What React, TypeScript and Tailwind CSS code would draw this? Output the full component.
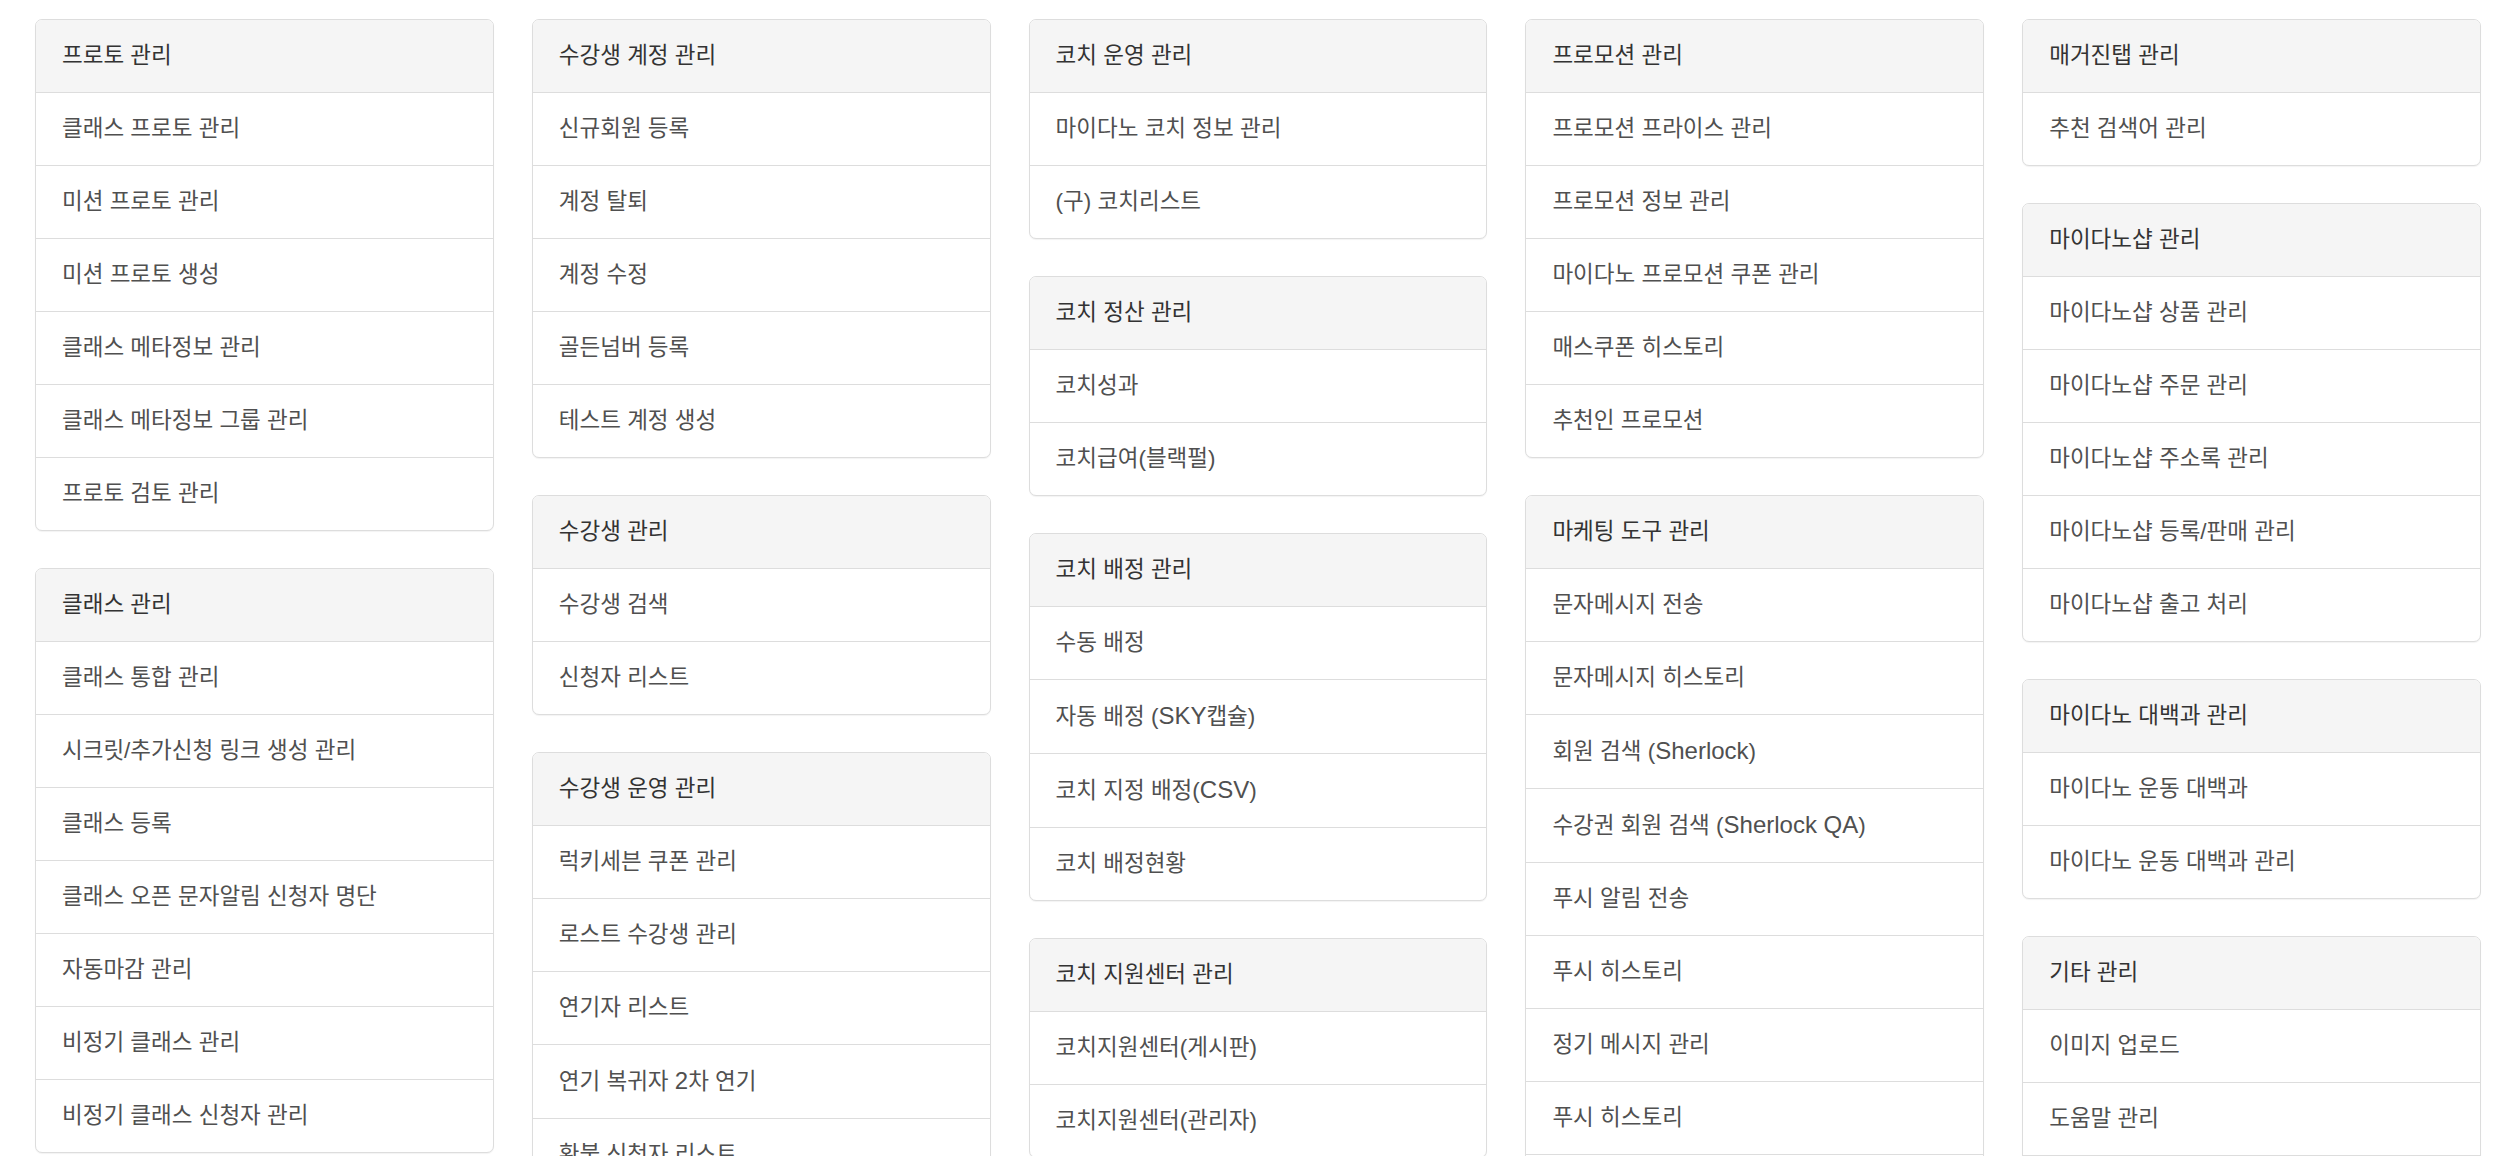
import React from "react";

type Panel = { title: string; items: string[] };

const columns: Panel[][] = [
  [
    {
      title: "프로토 관리",
      items: [
        "클래스 프로토 관리",
        "미션 프로토 관리",
        "미션 프로토 생성",
        "클래스 메타정보 관리",
        "클래스 메타정보 그룹 관리",
        "프로토 검토 관리",
      ],
    },
    {
      title: "클래스 관리",
      items: [
        "클래스 통합 관리",
        "시크릿/추가신청 링크 생성 관리",
        "클래스 등록",
        "클래스 오픈 문자알림 신청자 명단",
        "자동마감 관리",
        "비정기 클래스 관리",
        "비정기 클래스 신청자 관리",
      ],
    },
  ],
  [
    {
      title: "수강생 계정 관리",
      items: ["신규회원 등록", "계정 탈퇴", "계정 수정", "골든넘버 등록", "테스트 계정 생성"],
    },
    { title: "수강생 관리", items: ["수강생 검색", "신청자 리스트"] },
    {
      title: "수강생 운영 관리",
      items: [
        "럭키세븐 쿠폰 관리",
        "로스트 수강생 관리",
        "연기자 리스트",
        "연기 복귀자 2차 연기",
        "환불 신청자 리스트",
        "휴면 수강생 관리",
      ],
    },
  ],
  [
    { title: "코치 운영 관리", items: ["마이다노 코치 정보 관리", "(구) 코치리스트"] },
    { title: "코치 정산 관리", items: ["코치성과", "코치급여(블랙펄)"] },
    {
      title: "코치 배정 관리",
      items: ["수동 배정", "자동 배정 (SKY캡슐)", "코치 지정 배정(CSV)", "코치 배정현황"],
    },
    { title: "코치 지원센터 관리", items: ["코치지원센터(게시판)", "코치지원센터(관리자)"] },
  ],
  [
    {
      title: "프로모션 관리",
      items: [
        "프로모션 프라이스 관리",
        "프로모션 정보 관리",
        "마이다노 프로모션 쿠폰 관리",
        "매스쿠폰 히스토리",
        "추천인 프로모션",
      ],
    },
    {
      title: "마케팅 도구 관리",
      items: [
        "문자메시지 전송",
        "문자메시지 히스토리",
        "회원 검색 (Sherlock)",
        "수강권 회원 검색 (Sherlock QA)",
        "푸시 알림 전송",
        "푸시 히스토리",
        "정기 메시지 관리",
        "푸시 히스토리",
        "배너 관리",
      ],
    },
  ],
  [
    { title: "매거진탭 관리", items: ["추천 검색어 관리"] },
    {
      title: "마이다노샵 관리",
      items: [
        "마이다노샵 상품 관리",
        "마이다노샵 주문 관리",
        "마이다노샵 주소록 관리",
        "마이다노샵 등록/판매 관리",
        "마이다노샵 출고 처리",
      ],
    },
    { title: "마이다노 대백과 관리", items: ["마이다노 운동 대백과", "마이다노 운동 대백과 관리"] },
    { title: "기타 관리", items: ["이미지 업로드", "도움말 관리", "공지사항 관리"] },
  ],
];

// latin runs are set a bit larger so they sit like the Helvetica in the original
const Label = ({ text }: { text: string }) => {
  const parts = text.split(/([A-Za-z][A-Za-z ]*[A-Za-z]|[A-Za-z0-9])/);
  return (
    <>
      {parts.map((p, i) =>
        i % 2 === 1 ? (
          <span key={i} className="text-[24px]">
            {p}
          </span>
        ) : (
          <React.Fragment key={i}>{p}</React.Fragment>
        )
      )}
    </>
  );
};

const MenuPanel = ({ panel }: { panel: Panel }) => {
  return (
    <div className="bg-white border border-[#dddddd] rounded-[7px] shadow-[0_1px_1px_rgba(0,0,0,0.05)] overflow-hidden">
      {/* Heading */}
      <div className="bg-[#f5f5f5] border-b border-[#dddddd] px-[26px] py-[18px] leading-[36px] text-[#333333]">
        <Label text={panel.title} />
      </div>
      {/* Links */}
      <div className="divide-y divide-[#dddddd]">
        {panel.items.map((item, index) => (
          <a
            key={index}
            href="#"
            className="block px-[26px] py-[18px] leading-[36px] text-[#505050] hover:bg-[#f5f5f5]"
          >
            <Label text={item} />
          </a>
        ))}
      </div>
    </div>
  );
};

const App = () => {
  return (
    <div
      className="min-h-screen bg-white pt-[19px] pl-[35px] pr-[19px] text-[22.5px]"
      style={{ fontFamily: '"Liberation Sans", "Noto Sans CJK KR", sans-serif' }}
    >
      <div className="grid grid-cols-5 gap-x-[38px] items-start">
        {columns.map((col, ci) => (
          <div key={ci} className="flex flex-col gap-[37px]">
            {col.map((panel, pi) => (
              <MenuPanel key={pi} panel={panel} />
            ))}
          </div>
        ))}
      </div>
    </div>
  );
};

export default App;
